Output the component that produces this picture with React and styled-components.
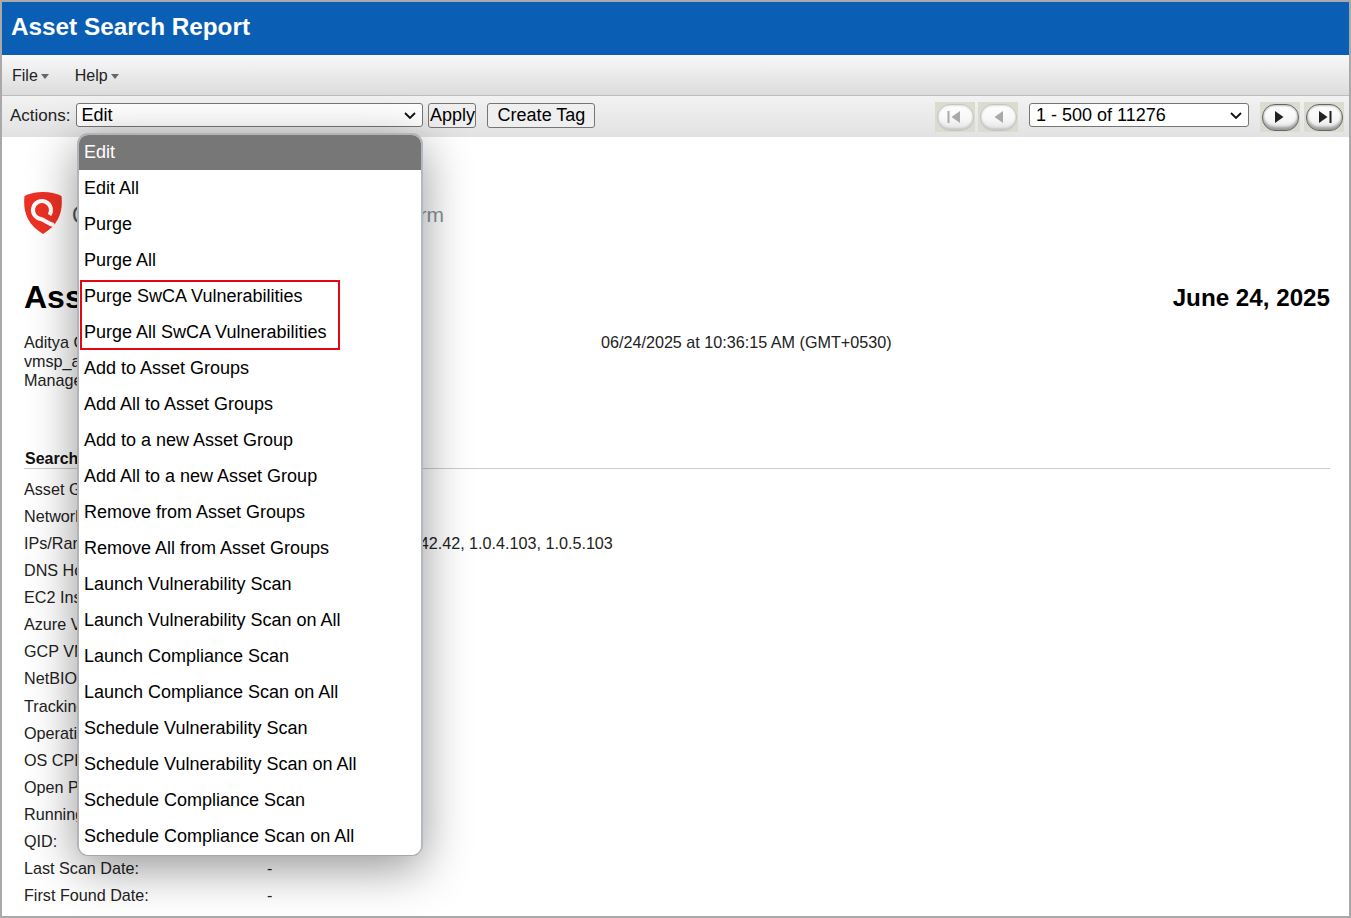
import React from 'react';
import styled, { createGlobalStyle } from 'styled-components';

const Global = createGlobalStyle`
  html, body { margin: 0; padding: 0; background: #fff; }
  body { font-family: "Liberation Sans", Arial, sans-serif; color: #000; }
`;
const chevron = `url("data:image/svg+xml,%3Csvg xmlns='http://www.w3.org/2000/svg' width='12' height='7' viewBox='0 0 12 7'%3E%3Cpath d='M1 1l5 5 5-5' fill='none' stroke='%23111' stroke-width='1.800'/%3E%3C/svg%3E")`;
const Frame = styled.div`
  position: relative; box-sizing: border-box; width: 1351px; height: 918px;
  border: 2px solid #a9a9a9; overflow: hidden; background: #fff;
`;
const Banner = styled.header`
  height: 53px; background: #0a5fb4; color: #fff; display: flex; align-items: center;
  padding-left: 9px; font-size: 24.3px; font-weight: 700; padding-bottom: 3px; box-sizing: border-box;
`;
const MenuBar = styled.nav`
  height: 41px; box-sizing: border-box; display: flex; align-items: center; gap: 26px; padding: 2px 0 0 10px;
  background: linear-gradient(#f8f8f8, #dcdcdc); border-bottom: 1px solid #bdbdbd; font-size: 16px; color: #222;
`;
const MenuItem = styled.span`
  display: inline-flex; align-items: center; gap: 3px;
  &::after { content: ""; border: 4.5px solid transparent; border-top: 5px solid #666; border-bottom: 0; margin-top: 1px; }
`;
const Toolbar = styled.div`
  height: 41px; box-sizing: border-box; display: flex; align-items: center; padding: 0 5px 3px 8px;
  background: linear-gradient(#f2f2f2, #e2e2e2); font-size: 17px; color: #222;
`;
const ToolLabel = styled.span` margin: 2px 6px 0 0; `;
const NativeSelect = styled.select`
  appearance: none; width: ${p => p.$w}px; height: 24px; box-sizing: border-box; border: 1px solid #767676; border-radius: 3px;
  margin-left: ${p => p.$ml}px; padding: 0 0 0 ${p => p.$pad}px;
  background: #fff ${chevron} no-repeat right 6px center; color: #000; font: 18px "Liberation Sans", Arial, sans-serif;
`;
const ToolButton = styled.button`
  height: 25px; box-sizing: border-box; padding: 0; margin-left: ${p => p.$ml}px; width: ${p => p.$w}px;
  background: #efefef; color: #000; border: 1px solid #767676; border-radius: 3px;
  font: 18px "Liberation Sans", Arial, sans-serif;
`;
const Spacer = styled.div` flex: 1; `;
const PagerCell = styled.span`
  width: 40px; height: 30px; box-sizing: border-box; background: #dbdccf; display: inline-flex;
  align-items: center; justify-content: center; margin: 4px 0 0 ${p => p.$ml}px;
`;
const PagerPill = styled.span`
  width: 37px; height: 27px; box-sizing: border-box; border-radius: 13px; display: flex; align-items: center; justify-content: center;
  border: 1px solid ${p => p.$off ? '#c4c4c4' : '#666'};
  background: linear-gradient(#fff, #f6f6f6 60%, #e2e2e2);
  box-shadow: ${p => p.$off ? 'inset 0 -2px 2px #c8c8c8, inset 0 1px 2px #ddd' : 'inset 0 -3px 3px #999, inset 0 1px 2px #bbb'};
`;
const Report = styled.main` padding: 0 19px 0 22px; `;
const LogoRow = styled.div` display: flex; align-items: center; height: 42px; margin-top: 55px; `;
const QualysWord = styled.span` margin: 4px 0 0 10px; font-size: 23px; color: #54565a; `;
const PlatformWord = styled.span` margin: 4px 0 0 155px; font-size: 21px; color: #8b929a; `;
const TitleRow = styled.div` display: flex; justify-content: space-between; align-items: center; margin-top: 43px; height: 40px; `;
const ReportTitle = styled.h1` margin: 0; font-size: 32px; font-weight: 700; `;
const ReportDate = styled.div` font-size: 24.2px; font-weight: 700; padding-top: 2px; `;
const MetaGrid = styled.div` display: grid; grid-template-columns: 577px 1fr; margin-top: 16px; font-size: 16.17px; line-height: 19px; color: #222; height: 117px; `;
const SectionTitle = styled.div` font-size: 16px; font-weight: 700; padding: 0 1px; border-bottom: 1px solid #ccc; line-height: 18px; color: #111; `;
const Criteria = styled.dl` margin: 7px 0 0; display: grid; grid-template-columns: 243px 1fr; grid-auto-rows: 27.07px; font-size: 16.17px; color: #222; `;
const Term = styled.dt` margin: 0; line-height: 27px; `;
const Value = styled.dd` margin: 0; line-height: 27px; `;

const Popup = styled.div`
  position: absolute; left: 75px; top: 131px; width: 346px; box-sizing: border-box; background: #fff;
  border: 2px solid #b1b5ba; border-right-color: #b1b9c1; border-bottom: 1px solid #a8a8a8; border-radius: 11px; overflow: hidden;
  box-shadow: 0 12px 48px rgba(0,0,0,.42); font-size: 18px; color: #000;
`;
const PopupItem = styled.div`
  height: ${p => p.$active ? 35 : 36}px; margin-bottom: ${p => p.$active ? 1 : 0}px; line-height: 35px; padding-left: 5px; white-space: nowrap;
  background: ${p => p.$active ? '#777777' : '#fff'}; color: ${p => p.$active ? '#fff' : '#000'};
`;
const RedBox = styled.div`
  position: absolute; left: 1px; top: 145px; width: 260px; height: 70px; box-sizing: border-box; border: 2px solid #e30613;
`;

const PagerIcon = ({ c, bar, dir }) => (
  <svg width="16" height="14" viewBox="0 0 16 14">
    {dir === 'left'
      ? <><path d="M13 1 L4.500 7 L13 13Z" fill={c} />{bar && <rect x="0.500" y="1" width="2" height="12" fill={c} />}</>
      : <><path d="M3 1 L11.500 7 L3 13Z" fill={c} />{bar && <rect x="13.500" y="1" width="2" height="12" fill={c} />}</>}
  </svg>
);
const Shield = () => (
  <svg width="38" height="42" viewBox="0 0 38 42">
    <path d="M19 0 C26 0 32 1.500 37.500 4 C39 18 36 32 19 42 C2 32 -1 18 0.500 4 C6 1.500 12 0 19 0Z" fill="#ee3124" />
    <path d="M25.500 23 A9 9 0 1 0 17 27 C21 28 24 32 30 33" fill="none" stroke="#fff" strokeWidth="4" />
  </svg>
);

const items = ['Edit','Edit All','Purge','Purge All','Purge SwCA Vulnerabilities','Purge All SwCA Vulnerabilities','Add to Asset Groups','Add All to Asset Groups','Add to a new Asset Group','Add All to a new Asset Group','Remove from Asset Groups','Remove All from Asset Groups','Launch Vulnerability Scan','Launch Vulnerability Scan on All','Launch Compliance Scan','Launch Compliance Scan on All','Schedule Vulnerability Scan','Schedule Vulnerability Scan on All','Schedule Compliance Scan','Schedule Compliance Scan on All'];
const rows = [['Asset Groups:',''],['Network:',''],['IPs/Ranges:','1.0.1.1, 1.0.1.2, 1.10.42.42, 1.0.4.103, 1.0.5.103'],['DNS Hostname:',''],['EC2 Instance ID:',''],['Azure VM ID:',''],['GCP VM ID:',''],['NetBIOS:',''],['Tracking Method:',''],['Operating System:',''],['OS CPE:',''],['Open Ports:',''],['Running Services:',''],['QID:',''],['Last Scan Date:','-'],['First Found Date:','-']];

export default function App() {
  return (
    <Frame>
      <Global />
      <Banner>Asset Search Report</Banner>
      <MenuBar><MenuItem>File</MenuItem><MenuItem>Help</MenuItem></MenuBar>
      <Toolbar>
        <ToolLabel>Actions:</ToolLabel>
        <NativeSelect $w={347} $ml={0} $pad={4} defaultValue="Edit"><option>Edit</option></NativeSelect>
        <ToolButton $ml={5} $w={48}>Apply</ToolButton>
        <ToolButton $ml={11} $w={108}>Create Tag</ToolButton>
        <Spacer />
        <PagerCell $ml={0}><PagerPill $off><PagerIcon c="#a9a9a9" bar dir="left" /></PagerPill></PagerCell>
        <PagerCell $ml={3}><PagerPill $off><PagerIcon c="#a9a9a9" dir="left" /></PagerPill></PagerCell>
        <NativeSelect $w={220} $ml={11} $pad={6} defaultValue="p"><option value="p">1 - 500 of 11276</option></NativeSelect>
        <PagerCell $ml={11}><PagerPill><PagerIcon c="#222" dir="right" /></PagerPill></PagerCell>
        <PagerCell $ml={4}><PagerPill><PagerIcon c="#222" bar dir="right" /></PagerPill></PagerCell>
      </Toolbar>
      <Report>
        <LogoRow><Shield /><QualysWord>Qualys.</QualysWord><PlatformWord>Cloud Platform</PlatformWord></LogoRow>
        <TitleRow><ReportTitle>Asset Search Report</ReportTitle><ReportDate>June 24, 2025</ReportDate></TitleRow>
        <MetaGrid>
          <div>Aditya Gupta<br />vmsp_ag<br />Manager</div>
          <div>06/24/2025 at 10:36:15 AM (GMT+0530)</div>
        </MetaGrid>
        <SectionTitle>Search Criteria</SectionTitle>
        <Criteria>
          {rows.map(([k, v]) => <React.Fragment key={k}><Term>{k}</Term><Value>{v}</Value></React.Fragment>)}
        </Criteria>
      </Report>
      <Popup>
        {items.map((t, i) => <PopupItem key={t} $active={i === 0}>{t}</PopupItem>)}
        <RedBox />
      </Popup>
    </Frame>
  );
}
